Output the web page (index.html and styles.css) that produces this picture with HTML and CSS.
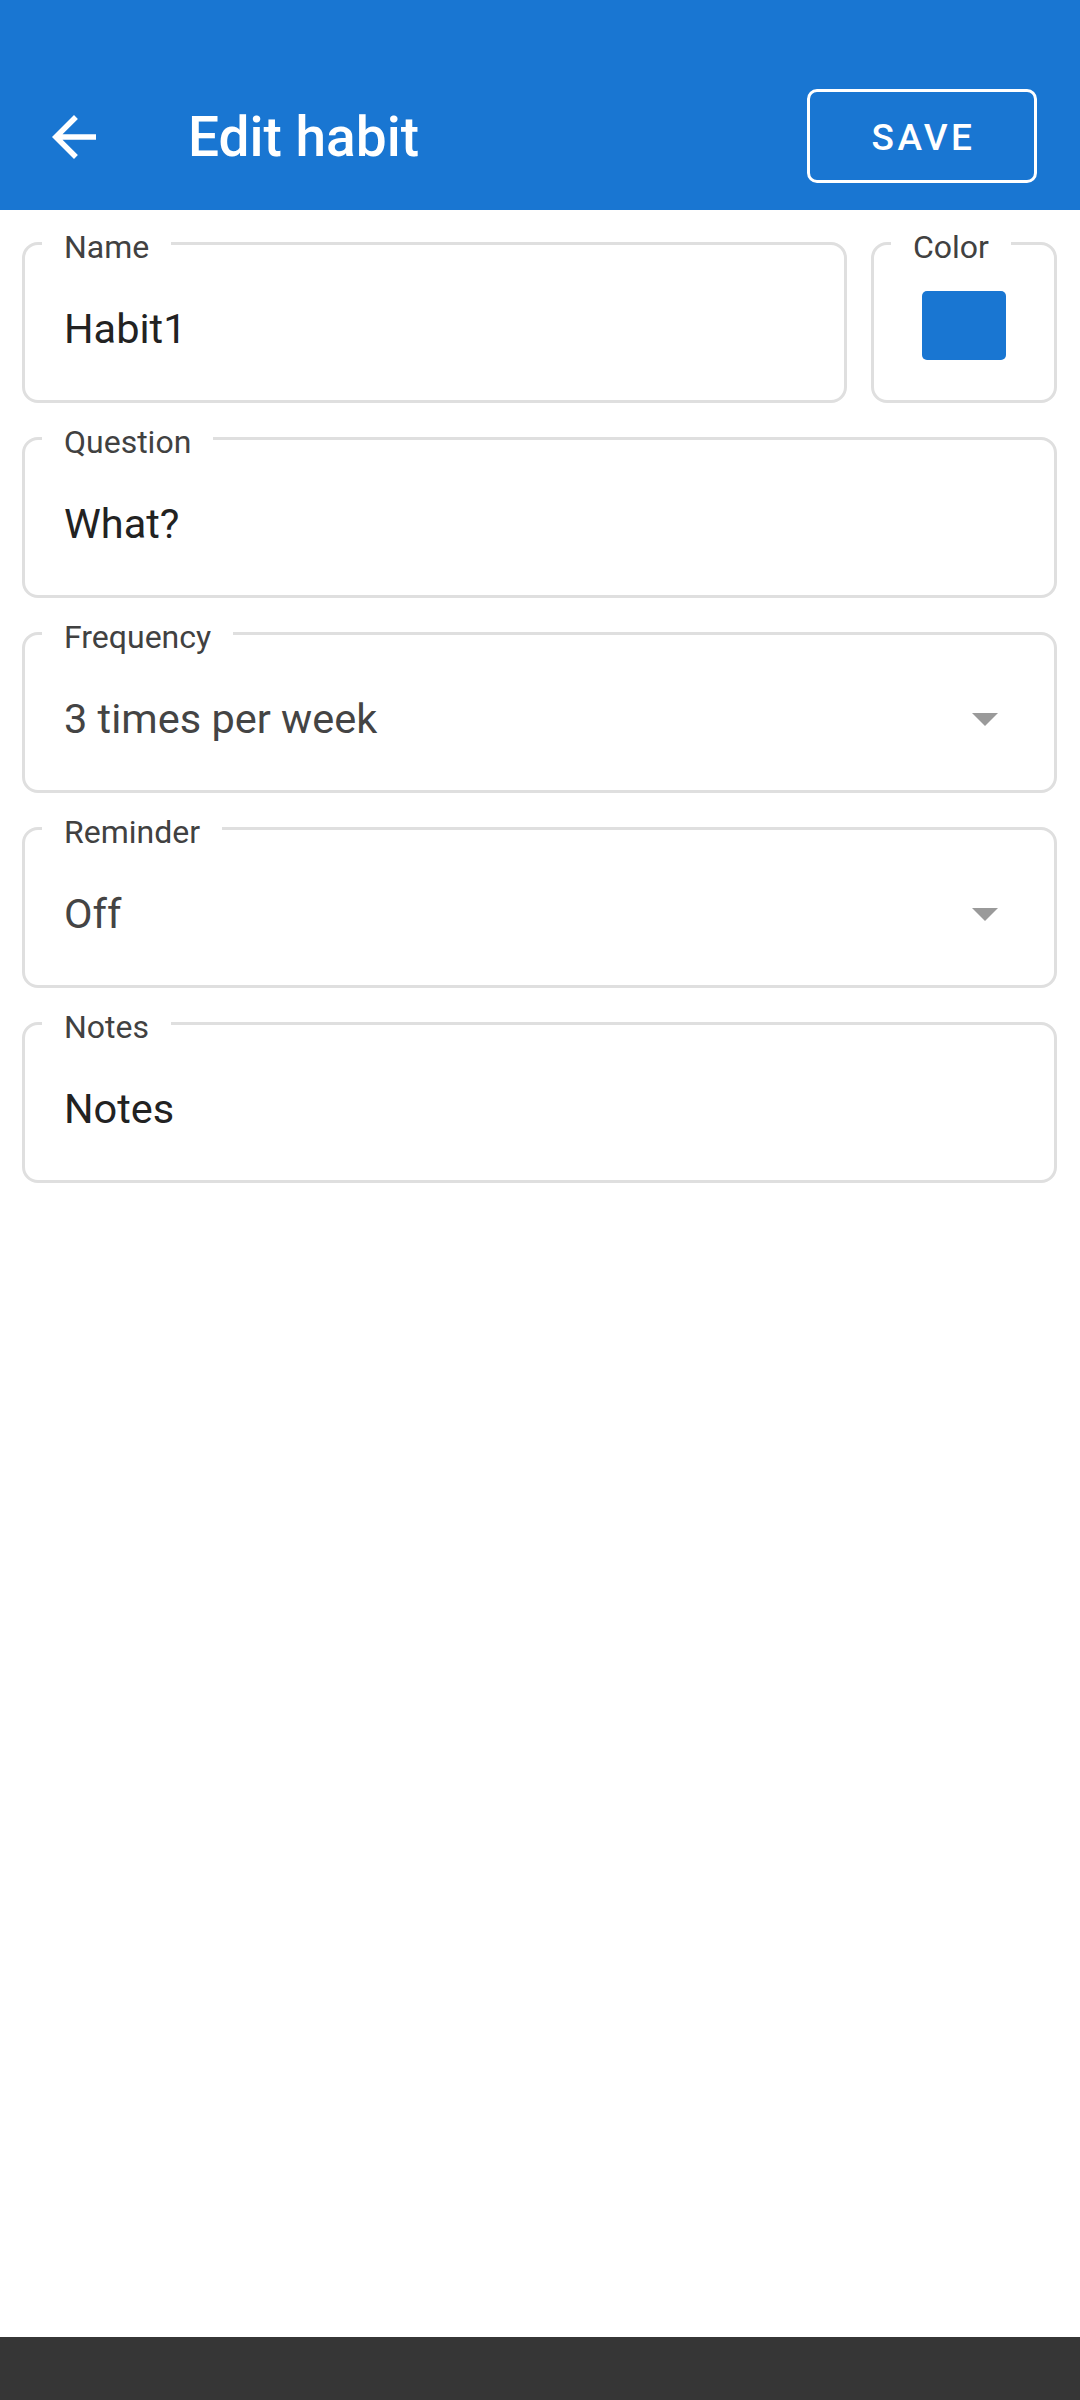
FILE: index.html
```html
<!DOCTYPE html>
<html lang="en">
<head>
<meta charset="utf-8">
<title>Edit habit</title>
<link rel="stylesheet" href="styles.css">
</head>
<body>
<div class="screen">
  <header class="appbar">
    <div class="toolbar">
      <svg class="back" viewBox="0 0 24 24" aria-hidden="true"><path d="M20 11H7.83l5.59-5.59L12 4l-8 8 8 8 1.41-1.41L7.83 13H20v-2z" fill="#fff"/></svg>
      <h1 class="title">Edit habit</h1>
      <button class="save">SAVE</button>
    </div>
  </header>
  <main class="form">
    <div class="row">
      <div class="field grow">
        <span class="label">Name</span>
        <span class="value">Habit1</span>
      </div>
      <div class="field color">
        <span class="label">Color</span>
        <span class="swatch"></span>
      </div>
    </div>
    <div class="field">
      <span class="label">Question</span>
      <span class="value">What?</span>
    </div>
    <div class="field">
      <span class="label">Frequency</span>
      <span class="value spin">3 times per week</span>
      <span class="caret"></span>
    </div>
    <div class="field">
      <span class="label">Reminder</span>
      <span class="value spin">Off</span>
      <span class="caret"></span>
    </div>
    <div class="field">
      <span class="label">Notes</span>
      <span class="value">Notes</span>
    </div>
  </main>
  <footer class="navbar"></footer>
</div>
</body>
</html>
```

FILE: styles.css
```css
* { box-sizing: border-box; }
html, body { margin: 0; padding: 0; background: #fff; }
body { font-family: Roboto, "Noto Sans", "Liberation Sans", sans-serif; }
.screen { width: 1080px; height: 2400px; display: flex; flex-direction: column; }

.appbar { background: #1976d2; padding-top: 63px; height: 210px; flex: none; }
.toolbar { height: 147px; display: flex; align-items: center; padding: 0 43px 0 41px; }
.back { width: 66px; height: 66px; flex: none; }
.title { margin: 0 0 0 81px; flex: 1; color: #fff; font-size: 55px; font-weight: 500; line-height: 66px; letter-spacing: 0; }
.save { width: 230px; height: 94px; border: 3px solid #fff; border-radius: 10px; background: transparent; color: #fff; font-family: inherit; font-size: 37px; font-weight: 500; letter-spacing: 3.4px; padding: 4px 0 0 3px; margin-top: -2px; }

.form { flex: 1; display: flex; flex-direction: column; gap: 34px; padding: 32px 23px 0 22px; }
.row { display: flex; gap: 24px; }
.grow { flex: 1; }
.field { position: relative; height: 161px; border: 3px solid #dfdfdf; border-radius: 16px; display: flex; align-items: center; padding: 12px 56px 0 39px; }
.label { position: absolute; top: -14px; left: 17px; padding: 0 22px; background: #fff; color: #414141; font-size: 32px; line-height: 32px; white-space: nowrap; }
.value { font-size: 41.5px; line-height: 48px; color: #222; flex: 1; }
.value.spin { color: #444; }
.caret { width: 0; height: 0; border-left: 13px solid transparent; border-right: 13px solid transparent; border-top: 13px solid #9a9a9a; margin-top: 2px; }
.color { width: 186px; flex: none; justify-content: center; padding: 6px 0 0 0; }
.swatch { width: 84px; height: 69px; background: #1976d2; border-radius: 5px; }

.navbar { height: 63px; background: #363636; flex: none; }
```
